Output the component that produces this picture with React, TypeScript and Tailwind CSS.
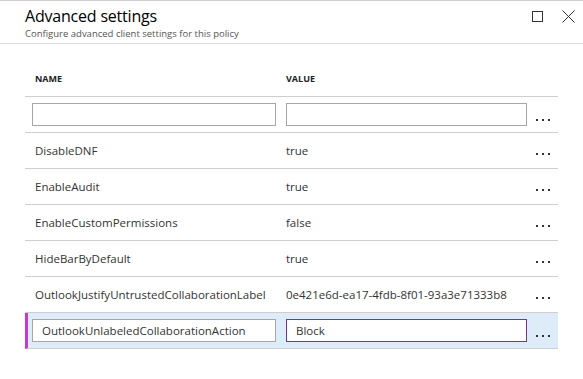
import React from 'react';

type Row = { name: string; value: string };

const rows: Row[] = [
  { name: 'DisableDNF', value: 'true' },
  { name: 'EnableAudit', value: 'true' },
  { name: 'EnableCustomPermissions', value: 'false' },
  { name: 'HideBarByDefault', value: 'true' },
  { name: 'OutlookJustifyUntrustedCollaborationLabel', value: '0e421e6d-ea17-4fdb-8f01-93a3e71333b8' },
];

function Dots({ offset }: { offset: string }) {
  return (
    <div className={`flex gap-[4px] ${offset}`}>
      <span className="w-[2px] h-[2px] bg-[#333]"></span>
      <span className="w-[2px] h-[2px] bg-[#333]"></span>
      <span className="w-[2px] h-[2px] bg-[#333]"></span>
    </div>
  );
}

export default function App() {
  return (
    <div
      className="w-[583px] h-[379px] bg-white border-t border-[#d0d0d0] text-[#333]"
      style={{ fontFamily: '"Segoe UI", "Open Sans", sans-serif' }}
    >
      <div className="flex items-start justify-between h-[43px] border-b border-[#dcdcdc]">
        <div className="pl-[25px] pt-[4px]">
          <h1 className="text-[16px] leading-[22px] tracking-[-0.2px] text-black">Advanced settings</h1>
          <p className="text-[9.5px] leading-[13px] text-[#555]">Configure advanced client settings for this policy</p>
        </div>
        <div className="flex items-center gap-[19px] pt-[9px] pr-[8px]">
          <span className="w-[11px] h-[11px] border border-[#333]"></span>
          <svg width="13" height="13" viewBox="0 0 13 13">
            <path d="M0.5 0.5 L12.5 12.5 M12.5 0.5 L0.5 12.5" stroke="#333" strokeWidth="1" fill="none" />
          </svg>
        </div>
      </div>

      <div className="mx-[25px] mt-[18px]">
        <div className="flex h-[35px] items-center border-b border-[#cfcfcf] text-[9px] font-bold text-[#222]">
          <div className="w-[261px] pl-[10px]">NAME</div>
          <div className="w-[241px]">VALUE</div>
        </div>

        <div className="flex h-[36px] items-center border-b border-[#cfcfcf]">
          <div className="w-[261px] pl-[7px]">
            <input className="w-[244px] h-[23px] border border-[#a6a6a6] outline-none" />
          </div>
          <div className="w-[241px]">
            <input className="w-[241px] h-[23px] border border-[#a6a6a6] outline-none" />
          </div>
          <div className="flex-1 flex justify-center">
            <Dots offset="mt-[10px]" />
          </div>
        </div>

        {rows.map((r) => (
          <div key={r.name} className="flex h-[36px] items-center border-b border-[#cfcfcf] text-[11.5px]">
            <div className="w-[261px] pl-[10px] whitespace-nowrap">{r.name}</div>
            <div className="w-[241px] whitespace-nowrap">{r.value}</div>
            <div className="flex-1 flex justify-center">
              <Dots offset="mt-[6px]" />
            </div>
          </div>
        ))}

        <div className="flex h-[36px] items-center border-b border-[#cfcfcf] border-l-[3px] border-l-[#c43bd0] bg-[#deecf9] text-[11.5px]">
          <div className="w-[258px] pl-[4px]">
            <input
              readOnly
              value="OutlookUnlabeledCollaborationAction"
              className="w-[244px] h-[23px] border border-[#a6a6a6] bg-white px-[9px] outline-none text-[#333]"
            />
          </div>
          <div className="w-[241px]">
            <input
              readOnly
              value="Block"
              className="w-[241px] h-[23px] border border-[#8a2aa0] bg-white px-[9px] outline-none text-[#333]"
            />
          </div>
          <div className="flex-1 flex justify-center">
            <Dots offset="mt-[10px]" />
          </div>
        </div>
      </div>
    </div>
  );
}
